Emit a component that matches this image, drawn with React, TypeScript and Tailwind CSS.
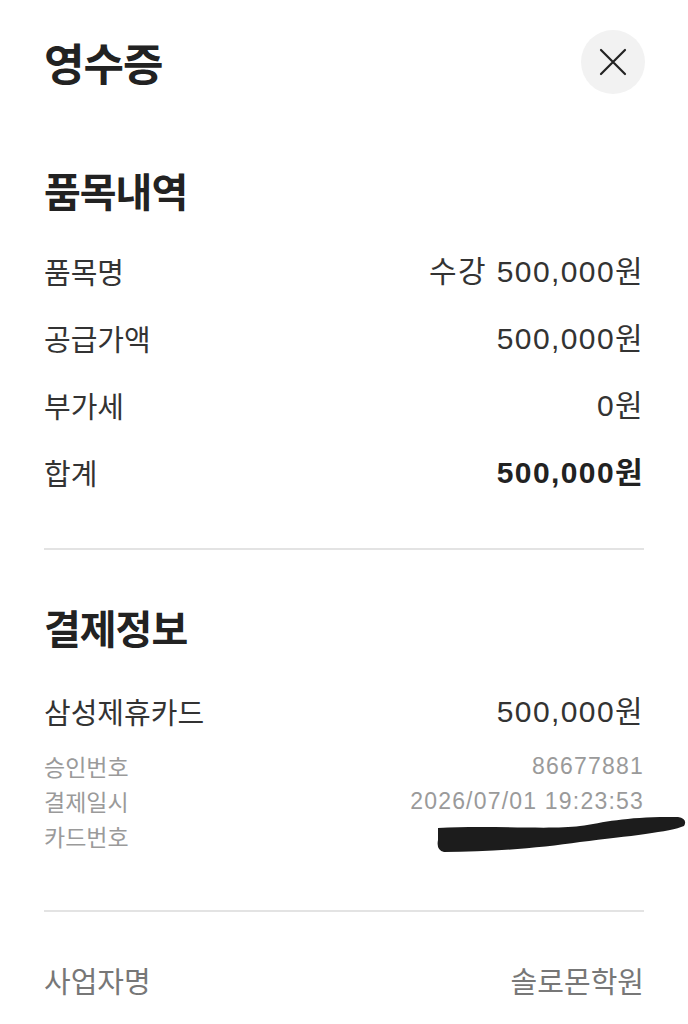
import React from 'react';

const itemRows = [
  { label: '품목명', value: '수강 500,000원' },
  { label: '공급가액', value: '500,000원' },
  { label: '부가세', value: '0원' },
  { label: '합계', value: '500,000원', strong: true },
];

const payRows = [
  { label: '승인번호', value: '86677881' },
  { label: '결제일시', value: '2026/07/01 19:23:53' },
  { label: '카드번호', value: '' },
];

export default function App() {
  return (
    <div className="relative w-[688px] h-[1024px] overflow-hidden bg-white px-[44px] font-['Noto_Sans_CJK_KR',sans-serif]">
      {/* header */}
      <div className="mt-[30px] h-[64px] flex items-center justify-between">
        <h1 className="text-[44px] leading-none font-bold text-[#222] tracking-[-1px]">영수증</h1>
        <button className="w-[64px] h-[64px] -mr-[1px] rounded-full bg-[#f2f2f2] flex items-center justify-center">
          <svg width="28" height="28" viewBox="0 0 28 28" fill="none">
            <path d="M2 2 L26 26 M26 2 L2 26" stroke="#222" strokeWidth="2.2" strokeLinecap="round" />
          </svg>
        </button>
      </div>

      {/* 품목내역 */}
      <h2 className="mt-[66px] h-[60px] flex items-center text-[40px] font-bold text-[#222] tracking-[-1px]">품목내역</h2>
      <div className="mt-[18px]">
        {itemRows.map((r) => (
          <div key={r.label} className="h-[67px] flex items-center justify-between text-[29px] text-[#333]">
            <span>{r.label}</span>
            <span className={`font-['Liberation_Sans','Noto_Sans_CJK_KR',sans-serif] text-[30px] tracking-[1.4px] ${r.strong ? 'font-bold text-[#222]' : ''}`}>{r.value}</span>
          </div>
        ))}
      </div>

      <div className="mt-[42px] h-[2px] bg-[#e3e3e3]" />

      {/* 결제정보 */}
      <h2 className="mt-[47px] h-[60px] flex items-center text-[40px] font-bold text-[#222] tracking-[-1px]">결제정보</h2>
      <div className="mt-[21px] h-[67px] flex items-center justify-between text-[29px] text-[#333]">
        <span>삼성제휴카드</span>
        <span className="font-['Liberation_Sans','Noto_Sans_CJK_KR',sans-serif] text-[30px] tracking-[1.4px]">500,000원</span>
      </div>
      <div className="mt-[4px]">
        {payRows.map((r) => (
          <div key={r.label} className="h-[35px] flex items-center justify-between text-[23px] text-[#9a9a9a]">
            <span>{r.label}</span>
            <span className="font-['Liberation_Sans','Noto_Sans_CJK_KR',sans-serif] text-[23px] tracking-[1.2px]">{r.value}</span>
          </div>
        ))}
      </div>

      <div className="mt-[56px] h-[2px] bg-[#e3e3e3]" />

      <div className="mt-[35px] h-[67px] flex items-center justify-between text-[29px] text-[#777]">
        <span>사업자명</span>
        <span>솔로몬학원</span>
      </div>

      {/* hand-drawn redaction over card number */}
      <svg className="absolute left-[430px] top-[810px]" width="258" height="48" viewBox="0 0 258 48" fill="none">
        <path
          d="M8 18 C 60 15, 120 20, 150 16 C 175 12, 200 6, 248 7 Q 258 9, 254 16 C 240 22, 200 26, 150 32 C 110 38, 60 42, 14 42 Q 6 40, 8 30 Z"
          fill="#1c1c1c"
        />
      </svg>
    </div>
  );
}
